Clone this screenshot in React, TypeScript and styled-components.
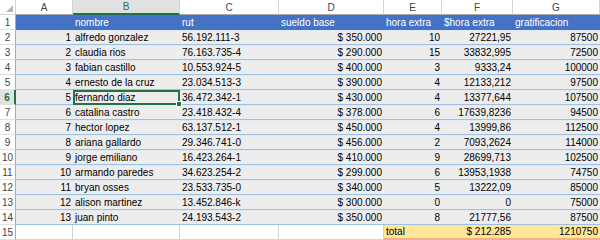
import styled, { createGlobalStyle, css } from "styled-components";

const GlobalStyle = createGlobalStyle`
  html, body { margin: 0; padding: 0; background: #ffffff; }
  body { font-family: "Liberation Sans", Arial, sans-serif; }
`;

type Kind = "head" | "band" | "blank" | "total" | "selected";

const Sheet = styled.div`
  display: grid;
  grid-template-columns: 16px 57px 107px 99px 105px 58px 71px 1fr;
  grid-auto-rows: 15px;
  width: 600px;
  height: 240px;
  overflow: hidden;
  font-size: 10px;
  color: #000;
`;

const Corner = styled.div`
  position: relative;
  background: #fff;
  border-right: 1px solid #d4d4d4;
  border-bottom: 1px solid #d4d4d4;
  box-sizing: border-box;
  &::after {
    content: "";
    position: absolute;
    right: 2px;
    bottom: 2px;
    border-left: 7px solid transparent;
    border-bottom: 7px solid #b7b7b7;
  }
`;

const ColHead = styled.div<{ $active?: boolean }>`
  box-sizing: border-box;
  display: flex;
  align-items: center;
  justify-content: center;
  background: #fff;
  color: #444;
  border-right: 1px solid #d4d4d4;
  border-bottom: 1px solid #ababab;
  ${(p) =>
    p.$active &&
    css`
      background: #e1e1e1;
      color: #217346;
      border-bottom: 2px solid #217346;
    `}
`;

const RowHead = styled.div<{ $active?: boolean }>`
  box-sizing: border-box;
  display: flex;
  align-items: center;
  justify-content: center;
  background: #fff;
  color: #444;
  border-right: 1px solid #ababab;
  border-bottom: 1px solid #e1e1e1;
  ${(p) =>
    p.$active &&
    css`
      background: #e1e1e1;
      color: #217346;
      font-weight: bold;
      border-right: 2px solid #217346;
    `}
`;

const Cell = styled.div<{ $kind: Kind; $right?: boolean }>`
  box-sizing: border-box;
  display: flex;
  align-items: center;
  justify-content: ${(p) => (p.$right ? "flex-end" : "flex-start")};
  padding: 0 2px;
  white-space: nowrap;
  overflow: hidden;
  ${(p) => {
    switch (p.$kind) {
      case "head":
        return css`
          background: #4472c4;
          color: #fff;
        `;
      case "band":
        return css`
          background: #ededed;
          border-top: 1px solid #ddebf7;
          border-bottom: 1px solid #9bc2e6;
        `;
      case "selected":
        return css`
          position: relative;
          overflow: visible;
          background: #ededed;
          outline: 2px solid #217346;
          outline-offset: -2px;
          &::after {
            content: "";
            position: absolute;
            right: -2px;
            bottom: -2px;
            width: 4px;
            height: 4px;
            background: #217346;
            border: 1px solid #fff;
          }
        `;
      case "total":
        return css`
          background: #ffe699;
          border-bottom: 2px solid #f4b183;
        `;
      default:
        return css`
          background: #fff;
          border-right: 1px solid #d4d4d4;
          border-bottom: 1px solid #d4d4d4;
        `;
    }
  }}
`;

const letters = ["A", "B", "C", "D", "E", "F", "G"];
const headers = ["", "nombre", "rut", "sueldo base", "hora extra", "$hora extra", "gratificacion"];

const rows: [string, string, string, string, string, string][] = [
  ["alfredo gonzalez", "56.192.111-3", "$ 350.000", "10", "27221,95", "87500"],
  ["claudia rios", "76.163.735-4", "$ 290.000", "15", "33832,995", "72500"],
  ["fabian castillo", "10.553.924-5", "$ 400.000", "3", "9333,24", "100000"],
  ["ernesto de la cruz", "23.034.513-3", "$ 390.000", "4", "12133,212", "97500"],
  ["fernando diaz", "36.472.342-1", "$ 430.000", "4", "13377,644", "107500"],
  ["catalina castro", "23.418.432-4", "$ 378.000", "6", "17639,8236", "94500"],
  ["hector lopez", "63.137.512-1", "$ 450.000", "4", "13999,86", "112500"],
  ["ariana gallardo", "29.346.741-0", "$ 456.000", "2", "7093,2624", "114000"],
  ["jorge emiliano", "16.423.264-1", "$ 410.000", "9", "28699,713", "102500"],
  ["armando paredes", "34.623.254-2", "$ 299.000", "6", "13953,1938", "74750"],
  ["bryan osses", "23.533.735-0", "$ 340.000", "5", "13222,09", "85000"],
  ["alison martinez", "13.452.846-k", "$ 300.000", "0", "0", "75000"],
  ["juan pinto", "24.193.543-2", "$ 350.000", "8", "21777,56", "87500"],
];

// columns that are right aligned in the body: A, D, E, F, G
const rightCols = [true, false, false, true, true, true, true];

export default function App() {
  return (
    <>
      <GlobalStyle />
      <Sheet>
        <Corner />
        {letters.map((l) => (
          <ColHead key={l} $active={l === "B"}>
            {l}
          </ColHead>
        ))}

        <RowHead>1</RowHead>
        {headers.map((h, i) => (
          <Cell key={i} $kind="head">
            {h}
          </Cell>
        ))}

        {rows.map((r, idx) => {
          const rowNo = idx + 2;
          const values = [String(idx + 1), ...r];
          return [
            <RowHead key={`h${rowNo}`} $active={rowNo === 6}>
              {rowNo}
            </RowHead>,
            ...values.map((v, c) => (
              <Cell
                key={`${rowNo}-${c}`}
                $kind={rowNo === 6 && c === 1 ? "selected" : "band"}
                $right={rightCols[c]}
              >
                {v}
              </Cell>
            )),
          ];
        })}

        <RowHead>15</RowHead>
        <Cell $kind="blank" />
        <Cell $kind="blank" />
        <Cell $kind="blank" />
        <Cell $kind="blank" />
        <Cell $kind="total">total</Cell>
        <Cell $kind="total" $right>
          $ 212.285
        </Cell>
        <Cell $kind="total" $right>
          1210750
        </Cell>
      </Sheet>
    </>
  );
}
